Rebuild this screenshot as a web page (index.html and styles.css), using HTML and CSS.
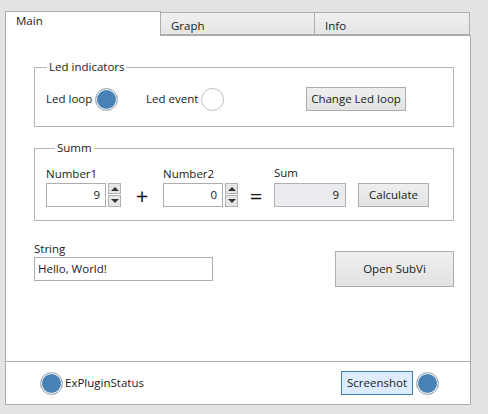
FILE: index.html
```html
<!DOCTYPE html>
<html>
<head>
<meta charset="utf-8">
<link rel="stylesheet" href="styles.css">
</head>
<body>
<div class="window">
  <div class="tabs">
    <div class="tab active">Main</div>
    <div class="tab">Graph</div>
    <div class="tab">Info</div>
  </div>
  <div class="panel">
    <div class="content">
      <fieldset class="group led-group">
        <legend class="legend-led">Led indicators</legend>
        <div class="led-row">
          <span class="led-label first">Led loop</span>
          <span class="led on"></span>
          <span class="led-label second">Led event</span>
          <span class="led off"></span>
          <button class="btn change-btn">Change Led loop</button>
        </div>
      </fieldset>

      <fieldset class="group summ-group">
        <legend class="legend-summ">Summ</legend>
        <div class="summ-row">
          <div class="num-col">
            <div class="field-label">Number1</div>
            <div class="num-ctrl">
              <div class="num-input">9</div>
              <div class="spinner">
                <span class="spin up"><i class="tri-up"></i></span>
                <span class="spin down"><i class="tri-down"></i></span>
              </div>
            </div>
          </div>
          <div class="op plus">+</div>
          <div class="num-col">
            <div class="field-label">Number2</div>
            <div class="num-ctrl">
              <div class="num-input">0</div>
              <div class="spinner">
                <span class="spin up"><i class="tri-up"></i></span>
                <span class="spin down"><i class="tri-down"></i></span>
              </div>
            </div>
          </div>
          <div class="op equals">=</div>
          <div class="sum-col">
            <div class="field-label sum-label">Sum</div>
            <div class="sum-output">9</div>
          </div>
          <button class="btn calc-btn">Calculate</button>
        </div>
      </fieldset>

      <div class="string-row">
        <div class="string-col">
          <div class="field-label">String</div>
          <div class="string-input">Hello, World!</div>
        </div>
        <button class="btn subvi-btn">Open SubVi</button>
      </div>
    </div>
    <div class="footer">
      <div class="status">
        <span class="led on"></span>
        <span class="status-text">ExPluginStatus</span>
      </div>
      <div class="shot">
        <button class="btn shot-btn">Screenshot</button>
        <span class="led on"></span>
      </div>
    </div>
  </div>
</div>
</body>
</html>
```
FILE: styles.css
```css
* { box-sizing: border-box; }
html, body { margin: 0; padding: 0; }
body {
  background: #e3e3e3;
  font-family: "Open Sans", "Noto Sans", sans-serif;
  font-size: 11.5px;
  color: #1a1a1a;
  width: 488px;
  height: 414px;
  overflow: hidden;
}
.window {
  padding: 11px 0 0 5px;
  width: 471px;
}
.tabs {
  display: flex;
  height: 24px;
  align-items: flex-end;
}
.tab {
  height: 23px;
  border: 1px solid #acacac;
  border-left: none;
  background: linear-gradient(#f0f0f0, #e5e5e5);
  padding: 5px 0 0 10px;
  line-height: 16px;
}
.tab.active {
  height: 25px;
  margin-bottom: -1px;
  border-left: 1px solid #acacac;
  border-bottom: none;
  background: #fff;
  padding: 1px 0 0 10px;
  width: 156px;
  position: relative;
  z-index: 1;
}
.tab:nth-child(2) { width: 154px; }
.tab:nth-child(3) { width: 155px; }

.panel {
  height: 370px;
  border: 1px solid #acacac;
  background: #fff;
  display: flex;
  flex-direction: column;
  width: 466px;
}
.content {
  flex: 1;
  padding: 23px 16px 0 28px;
}

.group {
  margin: 0;
  padding: 0 0 0 11px;
  border: 1px solid #b5b5b5;
  width: 420px;
  min-width: 0;
}
.group legend {
  padding: 0 2px;
  line-height: 16px;
}
.legend-led { margin-left: 1px; }
.legend-summ { margin-left: 9px; }

.led-group { padding-top: 12px; padding-bottom: 15px; }
.led-row {
  display: flex;
  align-items: center;
  height: 24px;
}
.led-label { line-height: 16px; }
.led-label.first { width: 49px; }
.led-label.second { width: 55px; margin-left: 28px; }

.led {
  display: inline-block;
  width: 23px;
  height: 23px;
  border-radius: 50%;
  border: 1px solid #bdbdbd;
  flex: none;
}
.led.on {
  background: #4682b4;
  box-shadow: inset 0 0 0 1px #fff;
  border-color: #b8b8b8;
}
.led.off { background: #fff; }

.btn {
  font: inherit;
  color: #1a1a1a;
  border: 1px solid #adadad;
  background: linear-gradient(#efefef, #e2e2e2);
  padding: 0;
  margin: 0;
  line-height: 16px;
}
.change-btn {
  width: 100px;
  height: 24px;
  margin-left: 82px;
}

.summ-group {
  margin-top: 13px;
  padding-top: 10px;
  padding-bottom: 13px;
}
.summ-row {
  display: flex;
  align-items: flex-end;
}
.field-label { line-height: 16px; height: 17px; }
.sum-label { margin-top: -1px; height: 18px; }
.num-col { width: 75px; }
.num-ctrl { display: flex; }
.num-input {
  width: 60px;
  height: 24px;
  border: 1px solid #abadb3;
  text-align: right;
  padding: 3px 5px 0 0;
  line-height: 16px;
}
.spinner {
  margin-left: 2px;
  display: flex;
  flex-direction: column;
  justify-content: space-between;
  height: 24px;
}
.spin {
  width: 13px;
  height: 11px;
  border: 1px solid #b0b0b0;
  background: #e6e6e6;
  display: flex;
  align-items: center;
  justify-content: center;
}
.spin.up { height: 11px; }
.spin.down { height: 12px; }
.tri-up, .tri-down {
  width: 0;
  height: 0;
  border-left: 4px solid transparent;
  border-right: 4px solid transparent;
}
.tri-up { border-bottom: 4px solid #333; }
.tri-down { border-top: 4px solid #333; }

.op {
  height: 24px;
  display: flex;
  align-items: center;
  justify-content: center;
  font-size: 22px;
  line-height: 24px;
  color: #111;
}
.plus { width: 42px; }
.equals { width: 36px; }
.sum-col { width: 72px; }
.sum-output {
  width: 72px;
  height: 24px;
  border: 1px solid #b2b2b2;
  background: #e9ebee;
  text-align: right;
  padding: 3px 6px 0 0;
  line-height: 16px;
}
.calc-btn {
  width: 71px;
  height: 24px;
  margin-left: 12px;
}

.string-row {
  margin-top: 20px;
  display: flex;
  justify-content: space-between;
  align-items: flex-start;
  width: 420px;
}
.string-col { width: 179px; }
.string-input {
  width: 179px;
  height: 24px;
  border: 1px solid #abadb3;
  padding: 3px 0 0 3px;
  line-height: 16px;
  margin-top: -1px;
}
.subvi-btn {
  width: 119px;
  height: 36px;
  margin-top: 10px;
}

.footer {
  height: 43px;
  border-top: 1px solid #acacac;
  display: flex;
  align-items: center;
  justify-content: space-between;
  padding: 0 31px 0 34px;
}
.status, .shot {
  display: flex;
  align-items: center;
}
.status-text { margin-left: 2px; line-height: 16px; }
.shot-btn {
  width: 72px;
  height: 24px;
  margin-right: 3px;
  background: #dcecfc;
  border-color: #3c7fb1;
}
```
